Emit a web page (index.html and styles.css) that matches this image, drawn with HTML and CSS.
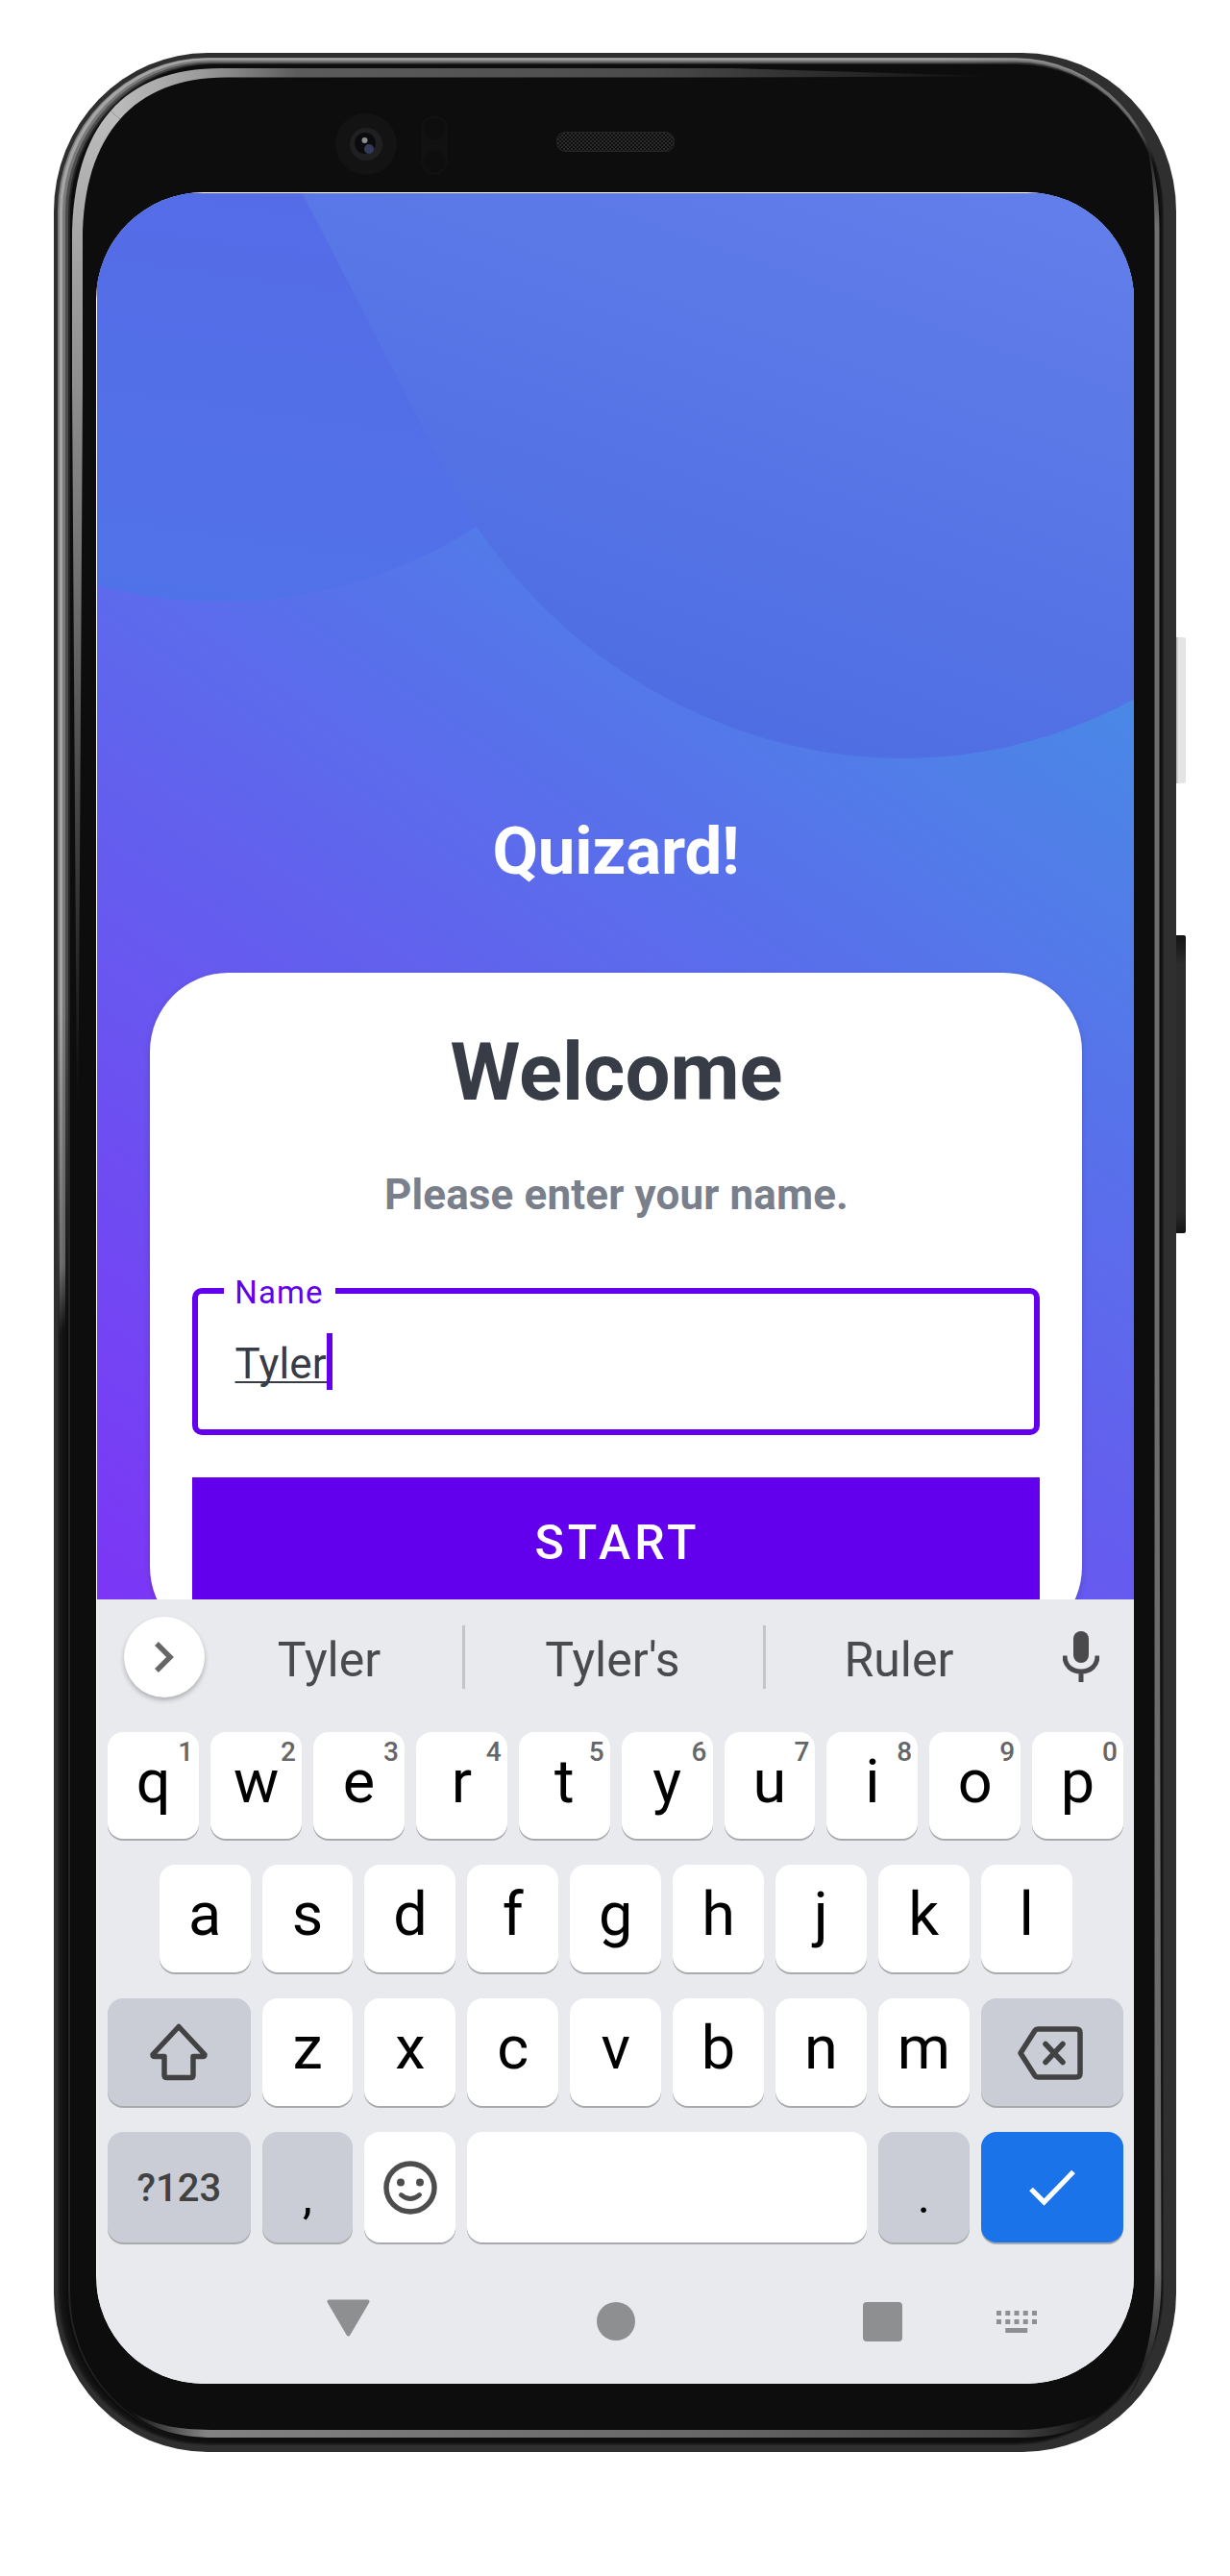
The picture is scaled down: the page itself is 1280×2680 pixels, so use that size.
FILE: index.html
```html
<!DOCTYPE html>
<html lang="en">
<head>
<meta charset="utf-8">
<title>Quizard!</title>
<link rel="stylesheet" href="styles.css">
</head>
<body>
<div class="device">
  <svg class="frame" viewBox="56 55 1178 2496" aria-hidden="true">
    <defs>
      <linearGradient id="rim1" gradientUnits="userSpaceOnUse" x1="1040" y1="0" x2="1211" y2="160"><stop offset="0" stop-color="#7c7c7c"/><stop offset="1" stop-color="#222"/></linearGradient>
      <linearGradient id="rim2" gradientUnits="userSpaceOnUse" x1="1040" y1="0" x2="1211" y2="160"><stop offset="0" stop-color="#a6a6a6"/><stop offset="0.8" stop-color="#6c6c6c"/><stop offset="1" stop-color="#161616"/></linearGradient>
      <linearGradient id="rim3" gradientUnits="userSpaceOnUse" x1="1040" y1="0" x2="1211" y2="160"><stop offset="0" stop-color="#7a7a7a"/><stop offset="0.8" stop-color="#666"/><stop offset="1" stop-color="#111"/></linearGradient>
      <linearGradient id="rim4" gradientUnits="userSpaceOnUse" x1="1040" y1="0" x2="1211" y2="160"><stop offset="0" stop-color="#4c4c4c"/><stop offset="1" stop-color="#0d0d0e"/></linearGradient>
      <linearGradient id="glowLeft" gradientUnits="userSpaceOnUse" x1="0" y1="115" x2="0" y2="1150"><stop offset="0" stop-color="#bdbdbd"/><stop offset="0.15" stop-color="#a2a2a2"/><stop offset="0.5" stop-color="#6c6c6c"/><stop offset="1" stop-color="#0d0d0e"/></linearGradient>
      <linearGradient id="glowTop" gradientUnits="userSpaceOnUse" x1="115" y1="0" x2="1040" y2="0"><stop offset="0" stop-color="#bdbdbd"/><stop offset="0.1" stop-color="#9c9c9c"/><stop offset="0.21" stop-color="#5c5c5c"/><stop offset="0.6" stop-color="#4c4c4c"/><stop offset="1" stop-color="#0d0d0e"/></linearGradient>
      <linearGradient id="glowRight" gradientUnits="userSpaceOnUse" x1="0" y1="140" x2="0" y2="2500"><stop offset="0" stop-color="#0d0d0e"/><stop offset="0.04" stop-color="#707070"/><stop offset="0.94" stop-color="#6a6a6a"/><stop offset="1" stop-color="#0d0d0e"/></linearGradient>
      <linearGradient id="glowBottom" gradientUnits="userSpaceOnUse" x1="132" y1="0" x2="1150" y2="0"><stop offset="0" stop-color="#0d0d0e"/><stop offset="0.08" stop-color="#828282"/><stop offset="0.6" stop-color="#666"/><stop offset="0.9" stop-color="#464646"/><stop offset="1" stop-color="#0d0d0e"/></linearGradient>
      <linearGradient id="power" x1="0" x2="1"><stop offset="0" stop-color="#8c8c8c"/><stop offset="0.3" stop-color="#b4b4b4"/><stop offset="0.45" stop-color="#e4e4e4"/><stop offset="1" stop-color="#e4e4e4"/></linearGradient>
      <linearGradient id="volume" x1="0" x2="0" y1="0" y2="1"><stop offset="0" stop-color="#141414"/><stop offset="0.1" stop-color="#2c2c2c"/><stop offset="0.93" stop-color="#292929"/><stop offset="1" stop-color="#151515"/></linearGradient>
      <pattern id="mesh" width="4" height="4" patternUnits="userSpaceOnUse"><rect width="4" height="4" fill="#0f0f0f"/><path d="M0 0h2v2h-2zM2 2h2v2h-2z" fill="#2a2a2a"/></pattern>
    </defs>
    <rect x="1220" y="663" width="14" height="152" rx="2" fill="url(#power)"/>
    <rect x="1220" y="973" width="14" height="310" rx="2" fill="url(#volume)"/>
    <rect x="56" y="55" width="1168" height="2496" rx="160" ry="165" fill="#2f2f2f"/>
    <rect x="60" y="60" width="1151" height="2484" rx="156" ry="160" fill="url(#rim1)"/>
    <rect x="62" y="60.5" width="1148" height="2482" rx="154" ry="159" fill="url(#rim2)"/>
    <rect x="65" y="62.5" width="1144" height="2479" rx="153" ry="158" fill="url(#rim3)"/>
    <rect x="68" y="64.5" width="1140" height="2476" rx="151" ry="157" fill="url(#rim4)"/>
    <rect x="71" y="66" width="1137" height="2474" rx="150" ry="156" fill="#242425"/>
    <rect x="73" y="67" width="1135" height="2473" rx="149" ry="155" fill="#0d0d0e"/>
    <path d="M80 1150L75 400V250C75 190 88.75 145 115 115.5L125 124C99.5 152.6 86 195 86 250V400L81.500 1150Z" fill="url(#glowLeft)"/>
    <path d="M115 115.500C141 85.800 180 71 230 71H760L1040 79.500L760 80.500H235C187.500 80.500 150 95.400 125 124Z" fill="url(#glowTop)"/>
    <path d="M1192 145C1200 175 1201.500 210 1201.500 240V2370C1201 2430 1190 2470 1170 2500C1195 2465 1208.500 2430 1208.500 2370L1206.500 1400V240C1206.500 205 1202 175 1192 145Z" fill="url(#glowRight)"/>
    <path d="M132 2506C160 2525 190 2528 225 2528H1060C1090 2528 1120 2522 1150 2508C1125 2530 1095 2536 1060 2536H225C180 2536 155 2526 132 2506Z" fill="url(#glowBottom)"/>
    <circle cx="381" cy="150" r="32" fill="#131314"/>
    <circle cx="381" cy="150" r="17" fill="#202023"/>
    <circle cx="380" cy="149" r="11" fill="#0b0b0e"/>
    <circle cx="384" cy="155" r="5" fill="#343b58"/>
    <circle cx="379.500" cy="146" r="3" fill="#8d8d8d"/>
    <rect x="438" y="120" width="28" height="62" rx="14" fill="#111112"/>
    <circle cx="452" cy="134" r="11" fill="#0e0e0e"/><circle cx="452" cy="168" r="11" fill="#0e0e0e"/>
    <rect x="579.500" y="137.500" width="122" height="20" rx="9" fill="url(#mesh)" stroke="#262626"/>
  </svg>

  <div class="screen">
    <main class="app">
      <svg class="backdrop" viewBox="101 201 1079 1463" aria-hidden="true">
        <defs>
          <linearGradient id="base" gradientUnits="userSpaceOnUse" x1="101" y1="1660" x2="882" y2="535"><stop offset="0" stop-color="#7c36f6"/><stop offset="1" stop-color="#4a88e6"/></linearGradient>
          <linearGradient id="blobA" gradientUnits="userSpaceOnUse" x1="300" y1="201" x2="240" y2="626"><stop offset="0" stop-color="#556ce7"/><stop offset="1" stop-color="#5072e8"/></linearGradient>
          <linearGradient id="blobB" gradientUnits="userSpaceOnUse" x1="1000" y1="180" x2="780" y2="789"><stop offset="0" stop-color="#627eea"/><stop offset="1" stop-color="#4d6de2"/></linearGradient>
        </defs>
        <rect x="101" y="201" width="1079" height="1463" fill="url(#base)"/>
        <circle cx="230" cy="134" r="492" fill="url(#blobA)"/>
        <path d="M314 200L412 390Q452 470 496 548C600 702 770 789 940 789C1030 789 1110 765 1181 727V200Z" fill="url(#blobB)"/>
      </svg>
      <h1 class="brand">Quizard!</h1>
      <section class="card">
        <h2 class="welcome">Welcome</h2>
        <p class="prompt">Please enter your name.</p>
        <div class="field">
          <span class="label">Name</span>
          <span class="value">Tyler</span><i class="caret"></i>
        </div>
        <button class="start">START</button>
      </section>
    </main>

    <section class="keyboard">
      <div class="suggestions">
        <span class="more"><svg width="22" height="34" viewBox="0 0 22 34"><path d="M3 3L17 17L3 31" fill="none" stroke="#666" stroke-width="5.500"/></svg></span>
        <span class="word">Tyler</span>
        <span class="word divided">Tyler's</span>
        <span class="word divided">Ruler</span>
        <svg class="mic" width="38" height="54" viewBox="0 0 38 54"><rect x="11" y="0" width="16" height="33" rx="8" fill="#4a4a4c"/><path d="M2 25.500C2 36 9 42 19 42S36 36 36 25.500M19 42V53" fill="none" stroke="#4a4a4c" stroke-width="5"/></svg>
      </div>
      <div class="keys">
        <span class="key">q<sup>1</sup></span><span class="key">w<sup>2</sup></span><span class="key">e<sup>3</sup></span><span class="key">r<sup>4</sup></span><span class="key">t<sup>5</sup></span><span class="key">y<sup>6</sup></span><span class="key">u<sup>7</sup></span><span class="key">i<sup>8</sup></span><span class="key">o<sup>9</sup></span><span class="key">p<sup>0</sup></span>
        <span class="key indent">a</span><span class="key">s</span><span class="key">d</span><span class="key">f</span><span class="key">g</span><span class="key">h</span><span class="key">j</span><span class="key">k</span><span class="key">l</span>
        <span class="key wide soft first"><svg width="62" height="62" viewBox="0 0 62 62"><path d="M31 4.500L58 33.500Q58 35.500 56 35.500H46V55Q46 57.500 43.500 57.500H18.500Q16 57.500 16 55V35.500H6Q4 35.500 4 33.500Z" fill="none" stroke="#424242" stroke-width="5.500" stroke-linejoin="round"/></svg></span>
        <span class="key">z</span><span class="key">x</span><span class="key">c</span><span class="key">v</span><span class="key">b</span><span class="key">n</span><span class="key">m</span>
        <span class="key wide soft"><svg class="erase" width="70" height="56" viewBox="0 0 70 56"><path d="M22 3H62Q66 3 66 7V49Q66 53 62 53H22Q20 53 19 51.500L4 28L19 4.500Q20 3 22 3Z" fill="none" stroke="#424242" stroke-width="5.500" stroke-linejoin="round"/><path d="M30 18.500L48 37.500M48 18.500L30 37.500" stroke="#424242" stroke-width="5.500" stroke-linecap="round"/></svg></span>
        <span class="key wide soft symbols first">?123</span>
        <span class="key soft mark">,</span>
        <span class="key"><svg width="56" height="56" viewBox="0 0 56 56"><circle cx="28" cy="28" r="25" fill="none" stroke="#4d4d4d" stroke-width="5.500"/><circle cx="18" cy="22.500" r="4" fill="#4d4d4d"/><circle cx="38" cy="22.500" r="4" fill="#4d4d4d"/><path d="M18.500 35.500Q28 43.500 37.500 35.500" fill="none" stroke="#4d4d4d" stroke-width="4.800" stroke-linecap="round"/></svg></span>
        <span class="key space"></span>
        <span class="key soft mark">.</span>
        <span class="key wide enter"><svg width="50" height="38" viewBox="0 0 50 38"><path d="M3 20.500L16.500 34L47 2.500" fill="none" stroke="#fff" stroke-width="5.200"/></svg></span>
      </div>
      <nav class="nav">
        <svg width="45" height="39" viewBox="0 0 45 39"><path d="M2.500 2.500H42.500L22.500 36.500Z" fill="#8e8f90" stroke="#8e8f90" stroke-width="4" stroke-linejoin="round"/></svg>
        <svg class="home" width="40" height="40" viewBox="0 0 40 40"><circle cx="20" cy="20" r="20" fill="#8e8f90"/></svg>
        <svg class="recent" width="41" height="41" viewBox="0 0 41 41"><rect width="41" height="41" rx="4" fill="#8e8f90"/></svg>
        <svg class="ime" width="42" height="23" viewBox="0 0 42 23" fill="#8e8f90"><path d="M0 0h5v5h-5zM9.250 0h5v5h-5zM18.500 0h5v5h-5zM27.750 0h5v5h-5zM37 0h5v5h-5zM0 9h5v5h-5zM9.250 9h5v5h-5zM18.500 9h5v5h-5zM27.750 9h5v5h-5zM37 9h5v5h-5zM9.250 18h23v5h-23z"/></svg>
      </nav>
    </section>
  </div>
</div>
</body>
</html>
```
FILE: styles.css
```css
* { box-sizing: border-box; }

body {
  margin: 0;
  background: #fff;
  font-family: Roboto, "Noto Sans", sans-serif;
}

h1, h2, p { margin: 0; }

svg { display: block; flex: none; }

.device {
  position: relative;
  width: 1168px;
  height: 2496px;
  margin: 55px 0 129px 56px;
  padding: 145px 44px 71px;
}

.frame {
  position: absolute;
  top: 0;
  left: 0;
  width: 1178px;
  height: 2496px;
}

.screen {
  position: relative;
  display: flex;
  flex-direction: column;
  height: 2280px;
  padding: 1px 0 0 1px;
  border-radius: 112px;
  background: #fff;
  overflow: hidden;
}

.app {
  position: relative;
  display: flex;
  flex-direction: column;
  align-items: center;
  height: 1463px;
  padding-top: 644px;
  overflow: hidden;
}

.backdrop {
  position: absolute;
  inset: 0;
  width: 100%;
  height: 100%;
}

.brand {
  position: relative;
  flex: none;
  height: 82px;
  padding-left: 1px;
  color: #fff;
  font-size: 69px;
  letter-spacing: -0.2px;
  line-height: 82px;
}

.card {
  position: relative;
  flex: none;
  width: 970px;
  height: 700px;
  margin-top: 85px;
  padding: 55px 44px 0;
  border-radius: 82px;
  background: #fff;
  box-shadow: 0 2px 6px rgba(0, 0, 0, 0.15);
  text-align: center;
}

.welcome {
  padding-left: 2px;
  color: #373c46;
  font-size: 83.3px;
  line-height: 98px;
}

.prompt {
  margin-top: 52px;
  padding-left: 2px;
  color: #7a808b;
  font-size: 44px;
  font-weight: 700;
  letter-spacing: 0.13px;
  line-height: 52px;
}

.field {
  position: relative;
  display: flex;
  align-items: center;
  height: 153px;
  margin-top: 71px;
  padding: 0 0 0 39px;
  border: 6px solid #6200ee;
  border-radius: 10px;
}

.label {
  position: absolute;
  top: -20px;
  left: 27px;
  width: 116px;
  background: #fff;
  color: #6200ee;
  font-size: 33px;
  letter-spacing: 1.1px;
  line-height: 38px;
}

.value {
  padding-top: 5px;
  color: #373c46;
  font-size: 44px;
  letter-spacing: 0.2px;
  line-height: 52px;
  text-decoration: underline;
  text-decoration-skip-ink: none;
  text-decoration-thickness: 2px;
  text-underline-offset: 3px;
}

.caret {
  width: 6px;
  height: 59px;
  background: #6200ee;
}

.start {
  display: block;
  width: 100%;
  height: 137px;
  margin-top: 44px;
  padding: 0 0 2px 4px;
  border: 0;
  background: #6200ee;
  color: #fff;
  font: 500 50px/58px Roboto, sans-serif;
  letter-spacing: 4px;
}

.keyboard {
  flex: 1;
  background: #e8eaee;
}

.suggestions {
  display: flex;
  align-items: center;
  height: 120px;
  padding-left: 28px;
  color: #4a4a4c;
}

.more {
  display: flex;
  align-items: center;
  justify-content: center;
  width: 84px;
  height: 84px;
  border-radius: 50%;
  background: #fff;
  box-shadow: 0 3px 5px rgba(0, 0, 0, 0.25);
}

.word {
  width: 313px;
  height: 66px;
  padding: 3px 3px 0 0;
  font-size: 50px;
  line-height: 66px;
  text-align: center;
}

.divided { border-left: 3px solid #c4c5c9; }

.word:nth-child(2) {
  width: 268px;
  padding-right: 9px;
}

.word:nth-child(4) { width: 283px; }

.mic { margin-left: 29px; }

.keys {
  display: grid;
  grid-template-columns: repeat(20, 1fr);
  grid-template-rows: 111px 112px 112px 115px;
  gap: 27px 12px;
  padding: 18px 11px 0 11.3px;
}

.key {
  position: relative;
  grid-column: span 2;
  display: flex;
  align-items: center;
  justify-content: center;
  padding-bottom: 8px;
  border-radius: 16px;
  background: #fff;
  box-shadow: 0 2px 0 #a9aaac;
  color: #000;
  font-size: 63px;
  line-height: 104px;
}

.key svg { margin-bottom: -8px; }

.key sup {
  position: absolute;
  top: 4px;
  right: 6px;
  color: #666;
  font-size: 28px;
  font-weight: 500;
  line-height: 34px;
}

.indent { grid-column: 2 / span 2; }

.wide { grid-column: span 3; }

.first { grid-column: 1 / span 3; }

.soft { background: #cacdd6; }

.key .erase { margin: 2px 3px -8px 0; }

.space { grid-column: span 8; }

.symbols {
  padding: 3px 0 0;
  color: #424242;
  font-size: 40px;
  font-weight: 500;
}

.mark {
  padding: 18px 0 0;
  font-size: 50px;
  line-height: 80px;
}

.enter { background: #1a73e8; }

.nav {
  display: flex;
  align-items: flex-start;
  padding: 59px 0 0 239px;
}

.home { margin: 3px 0 0 236px; }

.recent { margin: 3px 0 0 237px; }

.ime { margin: 12px 0 0 98px; }
```
